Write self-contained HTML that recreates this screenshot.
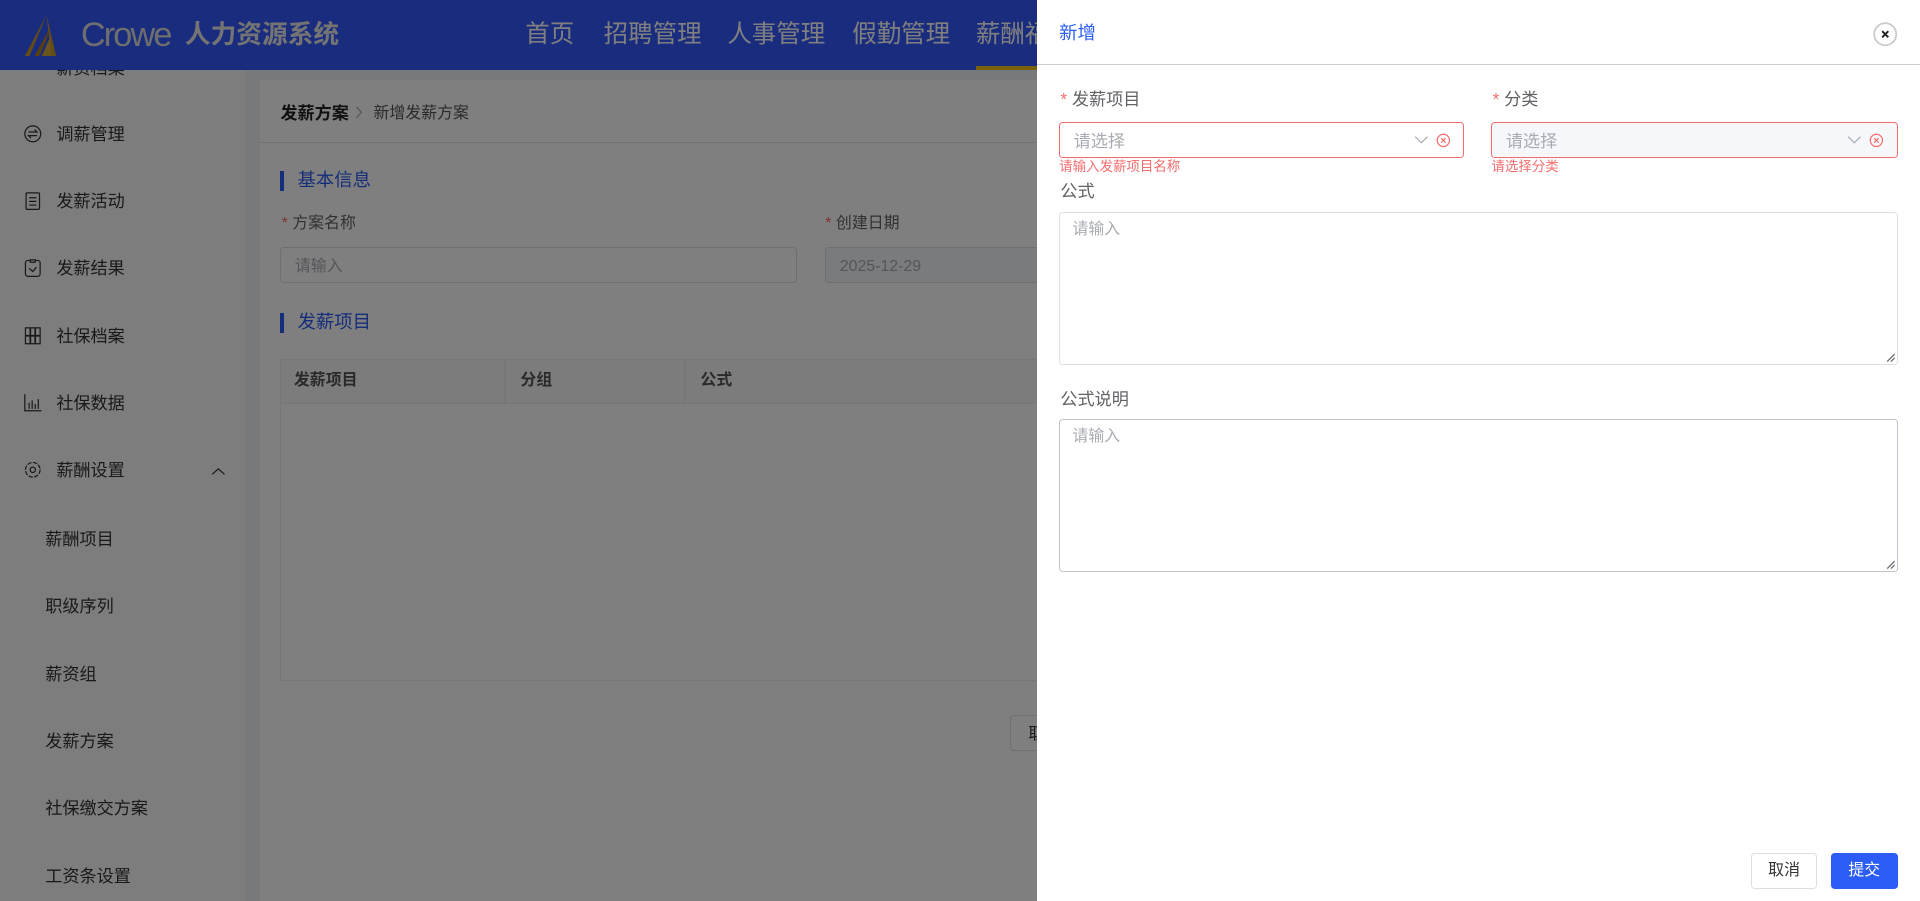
<!DOCTYPE html>
<html><head><meta charset="utf-8"><style>
html{zoom:1.22449}
*{box-sizing:border-box;margin:0;padding:0}
body{width:1568px;height:736px;overflow:hidden;position:relative;font-family:"Liberation Sans","Noto Sans CJK SC",sans-serif;background:#f0f2f5;color:#333;line-height:1.2}
.abs{position:absolute}
.hdr{left:0;top:0;width:1568px;height:57px;background:#3559fc}
.nav{top:16px;font-size:20px;color:#fff}
.side{left:0;top:57px;width:200px;height:679px;background:#fafafa}
.si{left:46px;font-size:14px;color:#333}
.ss{left:37px;font-size:14px;color:#333}
.ic{left:19px;width:16px;height:16px}
.card{left:212px;top:65px;width:1356px;height:671px;background:#fff}
.mask{left:0;top:0;width:1568px;height:736px;background:rgba(0,0,0,.5)}
.drawer{left:847px;top:0;width:721px;height:736px;background:#fff}
.lbl{font-size:14px;color:#606266}
.req{color:#f56c6c}
.sel{height:29px;border:1px solid #f56c6c;border-radius:3px;font-size:14px;color:#a8abb2;padding:5px 11px}
.err{font-size:11px;color:#f56c6c}
.ta{border:1px solid #dcdfe6;border-radius:3px;font-size:13px;color:#a8abb2;padding:6px 10px}
</style></head><body>
<div class="abs side"></div>
<div class="abs si" style="top:47px">薪资档案</div>
<div class="hdr abs"></div>
<svg class="abs" style="left:18px;top:12px" width="42" height="34" viewBox="0 0 42 34"><path d="M20 0 L2 34 L6 34 Z" fill="#c79a2a"/><path d="M20 0 L28 34 L24 34 Z" fill="#c79a2a"/><path d="M10 34 L22 12 L20 20 L14 34Z" fill="#b07e18"/><path d="M16 34 L23 18 L24 34Z" fill="#d4a83c"/></svg>
<div class="abs" style="left:66px;top:12px;font-size:28px;color:#dcdcdc;letter-spacing:-1.5px">Crowe</div>
<div class="abs" style="left:151px;top:16px;font-size:21px;color:#e8e8e8;font-weight:bold">人力资源系统</div>
<div class="abs nav" style="left:429px">首页</div>
<div class="abs nav" style="left:493px">招聘管理</div>
<div class="abs nav" style="left:594px">人事管理</div>
<div class="abs nav" style="left:696px">假勤管理</div>
<div class="abs nav" style="left:797px">薪酬福利</div>
<div class="abs" style="left:797px;top:54px;width:60px;height:3px;background:#f4c21c"></div>

<div class="abs si" style="top:101px">调薪管理</div>
<svg class="abs ic" style="top:101px" viewBox="0 0 16 16"><circle cx="8" cy="8" r="6.5" fill="none" stroke="#333"/><path d="M4.5 6.5h7l-2-2M11.5 9.5h-7l2 2" fill="none" stroke="#333"/></svg>
<div class="abs si" style="top:156px">发薪活动</div>
<svg class="abs ic" style="top:156px" viewBox="0 0 16 16"><rect x="2.5" y="1.5" width="11" height="13.5" rx="1" fill="none" stroke="#333"/><path d="M5 5.5h6M5 8.5h6M5 11.5h6" stroke="#333"/></svg>
<div class="abs si" style="top:211px">发薪结果</div>
<svg class="abs ic" style="top:211px" viewBox="0 0 16 16"><rect x="2" y="2" width="12" height="13" rx="2" fill="none" stroke="#333"/><path d="M6 1.5h4v2H6z" fill="#fff" stroke="#333"/><path d="M5 8.5l3 2.5 3-3.5" fill="none" stroke="#333"/></svg>
<div class="abs si" style="top:266px">社保档案</div>
<svg class="abs ic" style="top:266px" viewBox="0 0 16 16"><rect x="2" y="1.5" width="12" height="13" fill="none" stroke="#333"/><path d="M6 1.5v13M10 1.5v13M2 8h12" stroke="#333" stroke-width="1.4"/></svg>
<div class="abs si" style="top:321px">社保数据</div>
<svg class="abs ic" style="top:321px" viewBox="0 0 16 16"><path d="M1.5 1v13.5H15M5 13V8M7.5 13V6M10 13V9M12.5 13V5" fill="none" stroke="#333"/></svg>
<div class="abs si" style="top:376px">薪酬设置</div>
<svg class="abs ic" style="top:376px" viewBox="0 0 16 16"><circle cx="8" cy="8" r="6" fill="none" stroke="#333" stroke-dasharray="3.5 1.2"/><circle cx="8" cy="8" r="2.2" fill="none" stroke="#333"/></svg>
<svg class="abs" style="left:172px;top:381px" width="12" height="8" viewBox="0 0 12 8"><path d="M1 6l5-4.5 5 4.5" fill="none" stroke="#333"/></svg>
<div class="abs ss" style="top:432px">薪酬项目</div>
<div class="abs ss" style="top:487px">职级序列</div>
<div class="abs ss" style="top:542px">薪资组</div>
<div class="abs ss" style="top:597px">发薪方案</div>
<div class="abs ss" style="top:652px">社保缴交方案</div>
<div class="abs ss" style="top:707px">工资条设置</div>

<div class="abs card"></div>
<div class="abs" style="left:229px;top:84px;font-size:14px;font-weight:bold;color:#222">发薪方案</div>
<svg class="abs" style="left:289px;top:86px" width="8" height="12" viewBox="0 0 8 12"><path d="M2 1.5l4 4.5-4 4.5" fill="none" stroke="#aaa"/></svg>
<div class="abs" style="left:305px;top:85px;font-size:13px;color:#555">新增发薪方案</div>
<div class="abs" style="left:212px;top:116px;width:1356px;height:1px;background:#e4e4e4"></div>
<div class="abs" style="left:229px;top:140px;width:3px;height:16px;background:#2b5cf6"></div>
<div class="abs" style="left:243px;top:138px;font-size:15px;color:#2b5cf6">基本信息</div>
<div class="abs lbl" style="left:230px;top:175px;font-size:13px"><span class="req">*</span> 方案名称</div>
<div class="abs lbl" style="left:674px;top:175px;font-size:13px"><span class="req">*</span> 创建日期</div>
<div class="abs" style="left:229px;top:202px;width:422px;height:29px;border:1px solid #dcdfe6;border-radius:3px;font-size:13px;color:#a8abb2;padding:7px 11px">请输入</div>
<div class="abs" style="left:674px;top:202px;width:300px;height:29px;border:1px solid #dcdfe6;background:#f5f7fa;border-radius:3px;font-size:13px;color:#a8abb2;padding:7px 11px">2025-12-29</div>
<div class="abs" style="left:229px;top:256px;width:3px;height:16px;background:#2b5cf6"></div>
<div class="abs" style="left:243px;top:254px;font-size:15px;color:#2b5cf6">发薪项目</div>
<div class="abs" style="left:229px;top:293px;width:700px;height:263px;border:1px solid #ebeef5"></div>
<div class="abs" style="left:229px;top:293px;width:700px;height:37px;background:#f8f8f9;border:1px solid #ebeef5"></div>
<div class="abs" style="left:412px;top:293px;width:1px;height:37px;background:#ebeef5"></div>
<div class="abs" style="left:559px;top:293px;width:1px;height:37px;background:#ebeef5"></div>
<div class="abs" style="left:240px;top:303px;font-size:13px;font-weight:bold;color:#555">发薪项目</div>
<div class="abs" style="left:425px;top:303px;font-size:13px;font-weight:bold;color:#555">分组</div>
<div class="abs" style="left:572px;top:303px;font-size:13px;font-weight:bold;color:#555">公式</div>
<div class="abs" style="left:825px;top:584px;width:60px;height:29px;border:1px solid #dcdfe6;border-radius:3px;font-size:13px;padding:7px 14px">取消</div>

<div class="abs mask"></div>

<div class="abs drawer"></div>
<div class="abs" style="left:865px;top:18px;font-size:15px;color:#2b5cf6">新增</div>
<svg class="abs" style="left:1530px;top:18px" width="20" height="20" viewBox="0 0 20 20"><circle cx="10" cy="10" r="9" fill="#fff" stroke="#ccc" stroke-width="1.5"/><path d="M7.5 7.5l5 5M12.5 7.5l-5 5" stroke="#222" stroke-width="1.6"/></svg>
<div class="abs" style="left:847px;top:52px;width:721px;height:1px;background:#ccc"></div>
<div class="abs lbl" style="left:866px;top:73px"><span class="req">*</span> 发薪项目</div>
<div class="abs lbl" style="left:1219px;top:73px"><span class="req">*</span> 分类</div>
<div class="abs sel" style="left:865px;top:100px;width:331px;padding-top:6px">请选择</div>
<div class="abs sel" style="left:1218px;top:100px;width:332px;background:#f5f7fa;padding-top:6px">请选择</div>
<svg class="abs" style="left:1155px;top:109px" width="30" height="12" viewBox="0 0 30 12"><path d="M1 3l5 5 5-5" fill="none" stroke="#a8abb2"/><circle cx="24" cy="6" r="5" fill="none" stroke="#f56c6c"/><path d="M22.2 4.2l3.6 3.6M25.8 4.2l-3.6 3.6" stroke="#f56c6c"/></svg>
<svg class="abs" style="left:1508px;top:109px" width="30" height="12" viewBox="0 0 30 12"><path d="M1 3l5 5 5-5" fill="none" stroke="#a8abb2"/><circle cx="24" cy="6" r="5" fill="none" stroke="#f56c6c"/><path d="M22.2 4.2l3.6 3.6M25.8 4.2l-3.6 3.6" stroke="#f56c6c"/></svg>
<div class="abs err" style="left:865px;top:130px">请输入发薪项目名称</div>
<div class="abs err" style="left:1218px;top:130px">请选择分类</div>
<div class="abs lbl" style="left:866px;top:148px">公式</div>
<div class="abs ta" style="left:865px;top:173px;width:685px;height:125px">请输入</div>
<svg class="abs" style="left:1540px;top:288px" width="8" height="8"><path d="M7 1L1 7M7 4L4 7" stroke="#666"/></svg>
<div class="abs lbl" style="left:866px;top:318px">公式说明</div>
<div class="abs ta" style="left:865px;top:342px;width:685px;height:125px;border-color:#c0c4cc">请输入</div>
<svg class="abs" style="left:1540px;top:457px" width="8" height="8"><path d="M7 1L1 7M7 4L4 7" stroke="#666"/></svg>
<div class="abs" style="left:1430px;top:697px;width:54px;height:29px;border:1px solid #dcdfe6;border-radius:3px;font-size:13px;color:#333;text-align:center;line-height:27px">取消</div>
<div class="abs" style="left:1495px;top:697px;width:55px;height:29px;background:#2b5cf6;border-radius:3px;font-size:13px;color:#fff;text-align:center;line-height:29px">提交</div>
</body></html>
